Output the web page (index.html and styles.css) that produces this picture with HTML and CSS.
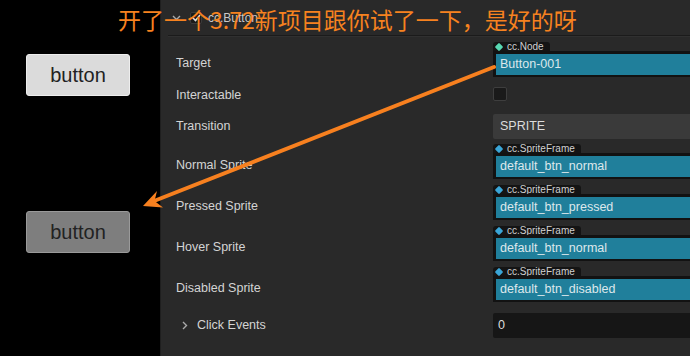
FILE: index.html
```html
<!DOCTYPE html>
<html lang="zh">
<head>
<meta charset="utf-8">
<title>cc.Button</title>
<link rel="stylesheet" href="styles.css">
</head>
<body>
<div class="app">
  <div class="scene">
    <div class="btn btn-normal">button</div>
    <div class="btn btn-pressed">button</div>
  </div>
  <div class="inspector">
    <div class="header">
      <span class="fold">
        <svg width="9" height="6" viewBox="0 0 9 6"><path d="M1 1 L4.5 4.5 L8 1" fill="none" stroke="#aaa" stroke-width="1.4"/></svg>
      </span>
      <span class="hcheck">
        <svg width="9" height="8" viewBox="0 0 9 8"><path d="M1 4 L3.5 6.5 L8 1" fill="none" stroke="#ddd" stroke-width="1.6"/></svg>
      </span>
      <span class="htitle">cc.Button</span>
    </div>

    <div class="row row-target">
      <div class="label">Target</div>
      <div class="value obj">
        <div class="tag"><span class="dia dia-node"></span>cc.Node</div>
        <div class="field">Button-001</div>
      </div>
    </div>

    <div class="row row-check">
      <div class="label label-plain">Interactable</div>
      <div class="value"><span class="checkbox"></span></div>
    </div>

    <div class="row row-select">
      <div class="label label-plain">Transition</div>
      <div class="value"><div class="select">SPRITE</div></div>
    </div>

    <div class="row row-sprite row-first">
      <div class="label">Normal Sprite</div>
      <div class="value obj">
        <div class="tag"><span class="dia"></span>cc.SpriteFrame</div>
        <div class="field">default_btn_normal</div>
      </div>
    </div>

    <div class="row row-sprite">
      <div class="label">Pressed Sprite</div>
      <div class="value obj">
        <div class="tag"><span class="dia"></span>cc.SpriteFrame</div>
        <div class="field">default_btn_pressed</div>
      </div>
    </div>

    <div class="row row-sprite">
      <div class="label">Hover Sprite</div>
      <div class="value obj">
        <div class="tag"><span class="dia"></span>cc.SpriteFrame</div>
        <div class="field">default_btn_normal</div>
      </div>
    </div>

    <div class="row row-sprite">
      <div class="label">Disabled Sprite</div>
      <div class="value obj">
        <div class="tag"><span class="dia"></span>cc.SpriteFrame</div>
        <div class="field">default_btn_disabled</div>
      </div>
    </div>

    <div class="row row-events">
      <div class="label label-plain label-events">
        <svg width="6" height="9" viewBox="0 0 6 9"><path d="M1 1 L4.5 4.5 L1 8" fill="none" stroke="#aaa" stroke-width="1.4"/></svg>
        <span>Click Events</span>
      </div>
      <div class="value"><div class="num">0</div></div>
    </div>
  </div>

  <div class="note">开了一个3.72新项目跟你试了一下，是好的呀</div>
  <svg class="arrow" width="690" height="356" viewBox="0 0 690 356">
    <line x1="494" y1="67" x2="154" y2="201" stroke="#f7801f" stroke-width="4" stroke-linecap="round"/>
    <polygon points="143,206 157,191 154.5,201 163,207.5" fill="#f7801f"/>
  </svg>
</div>
</body>
</html>
```

FILE: styles.css
```css
* { box-sizing: border-box; }
html, body { margin: 0; padding: 0; }
body {
  width: 690px;
  height: 356px;
  overflow: hidden;
  background: #000;
  font-family: "Liberation Sans", Arial, sans-serif;
}
.app {
  position: relative;
  display: flex;
  width: 690px;
  height: 356px;
}
.scene {
  width: 160px;
  flex: none;
  background: #000;
  display: flex;
  flex-direction: column;
  padding: 54px 0 0 26px;
}
.btn {
  width: 104px;
  height: 42px;
  border-radius: 3px;
  font-size: 20px;
  color: #222;
  display: flex;
  align-items: center;
  justify-content: center;
}
.btn-normal {
  background: #dbdbdb;
  border: 1px solid #eeeeee;
}
.btn-pressed {
  margin-top: 115px;
  background: #7e7e7e;
  border: 1px solid #9a9a9a;
}
.inspector {
  flex: 1;
  background: #292929;
  border-left: 1px solid #1f1f1f;
  display: flex;
  flex-direction: column;
  font-size: 12.5px;
  color: #d4d4d4;
}
.header {
  height: 36px;
  margin-left: 7px;
  border-bottom: 1px solid #1b1b1b;
  box-shadow: 0 1px 0 #303030;
  display: flex;
  align-items: center;
  padding-left: 4px;
}
.fold { display: flex; width: 14px; }
.hcheck {
  width: 12px;
  height: 12px;
  background: #1a1a1a;
  border: 1px solid #3a3a3a;
  border-radius: 2px;
  display: flex;
  align-items: center;
  justify-content: center;
  margin-left: 4px;
}
.htitle {
  margin-left: 6px;
  font-size: 12px;
  color: #c8c8c8;
}
.row {
  display: flex;
  align-items: flex-end;
  padding-left: 15px;
}
.label {
  width: 317px;
  flex: none;
  height: 21px;
  line-height: 21px;
  margin-bottom: 3px;
  white-space: nowrap;
}
.label-plain { margin-bottom: 0; }
.value { flex: 1; min-width: 0; }
.row-target { margin-top: 6px; }
.row-check { margin-top: 8px; align-items: center; }
.row-select { margin-top: 8px; align-items: center; }
.row-sprite { margin-top: 6px; }
.row-first { margin-top: 5px; }
.row-events { margin-top: 11px; align-items: center; }
.obj { display: flex; flex-direction: column; }
.tag {
  align-self: flex-start;
  height: 9px;
  line-height: 10px;
  font-size: 10px;
  background: #141414;
  color: #d0d0d0;
  border-radius: 3px 3px 0 0;
  padding: 0 6px 0 3px;
  display: flex;
  align-items: center;
  gap: 5px;
  overflow: visible;
}
.dia {
  width: 6px;
  height: 6px;
  background: #3aa6d8;
  transform: rotate(45deg);
  border-radius: 1px;
  flex: none;
}
.dia-node { background: #58d8b2; }
.field {
  height: 26px;
  background: #207f9b;
  border: solid #121212;
  border-width: 3px 0 2px 3px;
  line-height: 21px;
  padding-left: 4px;
  font-size: 12.5px;
  color: #dde8ec;
  white-space: nowrap;
}
.checkbox {
  display: block;
  width: 14px;
  height: 14px;
  margin-bottom: 4px;
  background: #1a1a1a;
  border: 1px solid #3e3e3e;
  border-radius: 2px;
}
.select {
  height: 25px;
  background: #3a3a3a;
  border-radius: 2px 0 0 2px;
  line-height: 25px;
  padding-left: 7px;
  color: #dcdcdc;
}
.label-events {
  display: flex;
  align-items: center;
  padding-left: 6px;
  gap: 9px;
}
.num {
  height: 25px;
  background: #161616;
  border-radius: 2px 0 0 2px;
  line-height: 25px;
  padding-left: 5px;
  color: #dcdcdc;
}
.note {
  position: absolute;
  left: 118px;
  top: 4px;
  font-family: "Noto Sans CJK SC", "Liberation Sans", sans-serif;
  font-size: 23px;
  line-height: 30px;
  color: #f7821f;
  white-space: nowrap;
}
.arrow {
  position: absolute;
  left: 0;
  top: 0;
  pointer-events: none;
}
```
